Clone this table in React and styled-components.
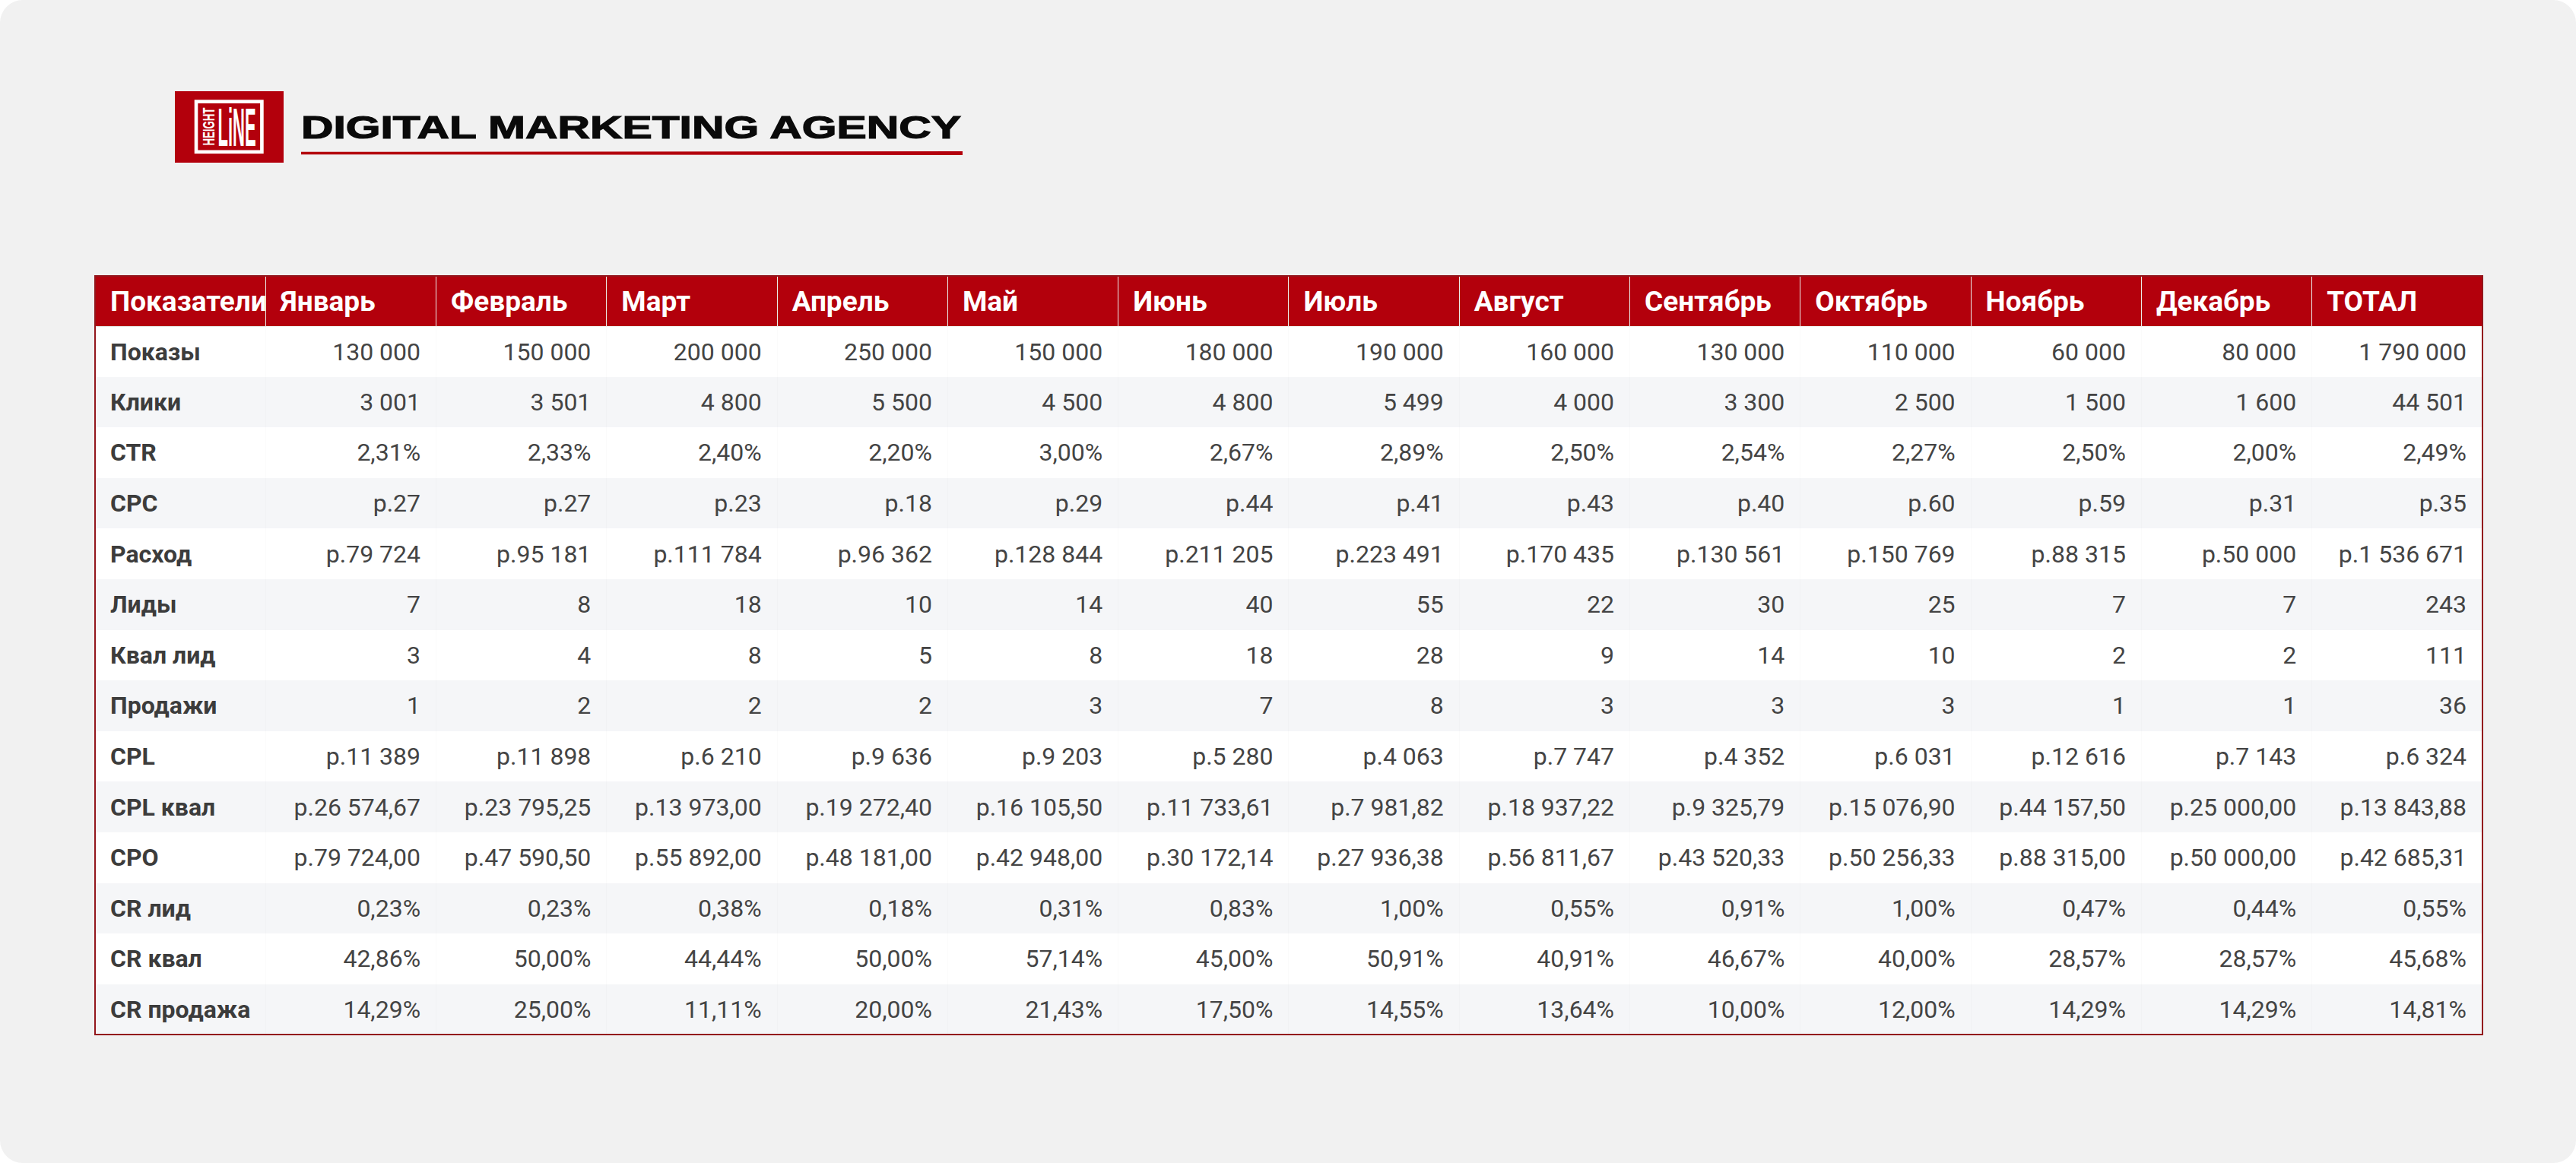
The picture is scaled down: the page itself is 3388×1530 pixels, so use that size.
import React from 'react';
import styled, { createGlobalStyle } from 'styled-components';

const GlobalStyle = createGlobalStyle`
  html, body {
    margin: 0;
    padding: 0;
    background: #ffffff;
  }
  body {
    font-family: Roboto, "Liberation Sans", sans-serif;
  }
`;

const Panel = styled.div`
  box-sizing: border-box;
  width: 3388px;
  min-height: 1530px;
  background: #f1f1f1;
  border-radius: 30px;
  padding: 120px 122px 0 124px;
`;

const Header = styled.header`
  display: flex;
  align-items: flex-start;
  gap: 23px;
  margin-left: 106px;
`;

const Brand = styled.div`
  display: flex;
  flex-direction: column;
  margin-top: 27px;
`;

const Wordmark = styled.div`
  width: 875px;
  height: 42px;
`;

const WordmarkText = styled.span`
  display: inline-block;
  font-family: "Liberation Sans", Arial, sans-serif;
  font-weight: 700;
  font-size: 42px;
  line-height: 42px;
  color: #0a0a0a;
  white-space: nowrap;
  -webkit-text-stroke: 1.2px #0a0a0a;
  transform: scaleX(1.4);
  transform-origin: left center;
`;

const Underline = styled.div`
  width: 870px;
  height: 5px;
  margin-top: 10px;
  background: #b3000c;
  clip-path: polygon(0 15%, 100% 0, 100% 100%, 0 85%);
`;

const TableWrap = styled.div`
  margin-top: 148px;
`;

const Table = styled.table`
  width: 100%;
  table-layout: fixed;
  border-collapse: collapse;
  border: 2px solid #93161c;
  font-family: Roboto, "Liberation Sans", sans-serif;
  font-size: 32px;
`;

const HeadRow = styled.tr`
  height: 66px;
  background: #b3000c;
`;

const HeadCell = styled.th`
  padding: 0 19px;
  text-align: left;
  font-size: 37px;
  font-weight: 700;
  color: #ffffff;
  white-space: nowrap;
  overflow: hidden;
  border-right: 1px solid rgba(0, 0, 0, 0.025);
  border-bottom: 1px solid rgba(0, 0, 0, 0.05);
`;

const Row = styled.tr`
  height: 66.6px;
  background: ${(p) => (p.$striped ? '#f5f6f8' : '#ffffff')};
`;

const LabelCell = styled.td`
  padding: 0 19px;
  font-weight: 700;
  color: #3c3c3c;
  white-space: nowrap;
  overflow: hidden;
  border-right: 1px solid rgba(0, 0, 0, 0.015);
`;

const ValueCell = styled.td`
  padding: 0 20px;
  text-align: right;
  color: #444444;
  white-space: nowrap;
  border-right: 1px solid rgba(0, 0, 0, 0.015);
`;

const COLUMNS = [
  'Показатели', 'Январь', 'Февраль', 'Март', 'Апрель', 'Май', 'Июнь',
  'Июль', 'Август', 'Сентябрь', 'Октябрь', 'Ноябрь', 'Декабрь', 'ТОТАЛ',
];

const ROWS = [
  ['Показы', '130 000|150 000|200 000|250 000|150 000|180 000|190 000|160 000|130 000|110 000|60 000|80 000|1 790 000'],
  ['Клики', '3 001|3 501|4 800|5 500|4 500|4 800|5 499|4 000|3 300|2 500|1 500|1 600|44 501'],
  ['CTR', '2,31%|2,33%|2,40%|2,20%|3,00%|2,67%|2,89%|2,50%|2,54%|2,27%|2,50%|2,00%|2,49%'],
  ['CPC', 'р.27|р.27|р.23|р.18|р.29|р.44|р.41|р.43|р.40|р.60|р.59|р.31|р.35'],
  ['Расход', 'р.79 724|р.95 181|р.111 784|р.96 362|р.128 844|р.211 205|р.223 491|р.170 435|р.130 561|р.150 769|р.88 315|р.50 000|р.1 536 671'],
  ['Лиды', '7|8|18|10|14|40|55|22|30|25|7|7|243'],
  ['Квал лид', '3|4|8|5|8|18|28|9|14|10|2|2|111'],
  ['Продажи', '1|2|2|2|3|7|8|3|3|3|1|1|36'],
  ['CPL', 'р.11 389|р.11 898|р.6 210|р.9 636|р.9 203|р.5 280|р.4 063|р.7 747|р.4 352|р.6 031|р.12 616|р.7 143|р.6 324'],
  ['CPL квал', 'р.26 574,67|р.23 795,25|р.13 973,00|р.19 272,40|р.16 105,50|р.11 733,61|р.7 981,82|р.18 937,22|р.9 325,79|р.15 076,90|р.44 157,50|р.25 000,00|р.13 843,88'],
  ['CPO', 'р.79 724,00|р.47 590,50|р.55 892,00|р.48 181,00|р.42 948,00|р.30 172,14|р.27 936,38|р.56 811,67|р.43 520,33|р.50 256,33|р.88 315,00|р.50 000,00|р.42 685,31'],
  ['CR лид', '0,23%|0,23%|0,38%|0,18%|0,31%|0,83%|1,00%|0,55%|0,91%|1,00%|0,47%|0,44%|0,55%'],
  ['CR квал', '42,86%|50,00%|44,44%|50,00%|57,14%|45,00%|50,91%|40,91%|46,67%|40,00%|28,57%|28,57%|45,68%'],
  ['CR продажа', '14,29%|25,00%|11,11%|20,00%|21,43%|17,50%|14,55%|13,64%|10,00%|12,00%|14,29%|14,29%|14,81%'],
];

// logo: condensed letters are made by stretching small text vertically
function Logo() {
  return (
    <svg width="143" height="94" viewBox="0 0 143 94">
      <rect x="0" y="0" width="143" height="94" fill="#b3000c" />
      <rect x="28" y="13.6" width="86.4" height="66.2" fill="none" stroke="#ffffff" strokeWidth="4.6" />
      <text
        x="0"
        y="0"
        transform="translate(51.5 71.5) rotate(-90) scale(1 1.7)"
        fill="#ffffff"
        fontFamily="Liberation Sans, Arial, sans-serif"
        fontWeight="700"
        fontSize="13.2"
      >
        HEIGHT
      </text>
      <text
        x="0"
        y="0"
        transform="translate(56.5 71.5) scale(1 3.17)"
        fill="#ffffff"
        fontFamily="Liberation Sans, Arial, sans-serif"
        fontWeight="700"
        fontSize="22"
      >
        LiNE
      </text>
    </svg>
  );
}

function App() {
  return (
    <>
      <GlobalStyle />
      <Panel>
        <Header>
          <Logo />
          <Brand>
            <Wordmark>
              <WordmarkText>DIGITAL MARKETING AGENCY</WordmarkText>
            </Wordmark>
            <Underline />
          </Brand>
        </Header>
        <TableWrap>
          <Table>
            <thead>
              <HeadRow>
                {COLUMNS.map((c) => (
                  <HeadCell key={c}>{c}</HeadCell>
                ))}
              </HeadRow>
            </thead>
            <tbody>
              {ROWS.map(([label, values], i) => (
                <Row key={label} $striped={i % 2 === 1}>
                  <LabelCell>{label}</LabelCell>
                  {values.split('|').map((v, j) => (
                    <ValueCell key={j}>{v}</ValueCell>
                  ))}
                </Row>
              ))}
            </tbody>
          </Table>
        </TableWrap>
      </Panel>
    </>
  );
}

export default App;
